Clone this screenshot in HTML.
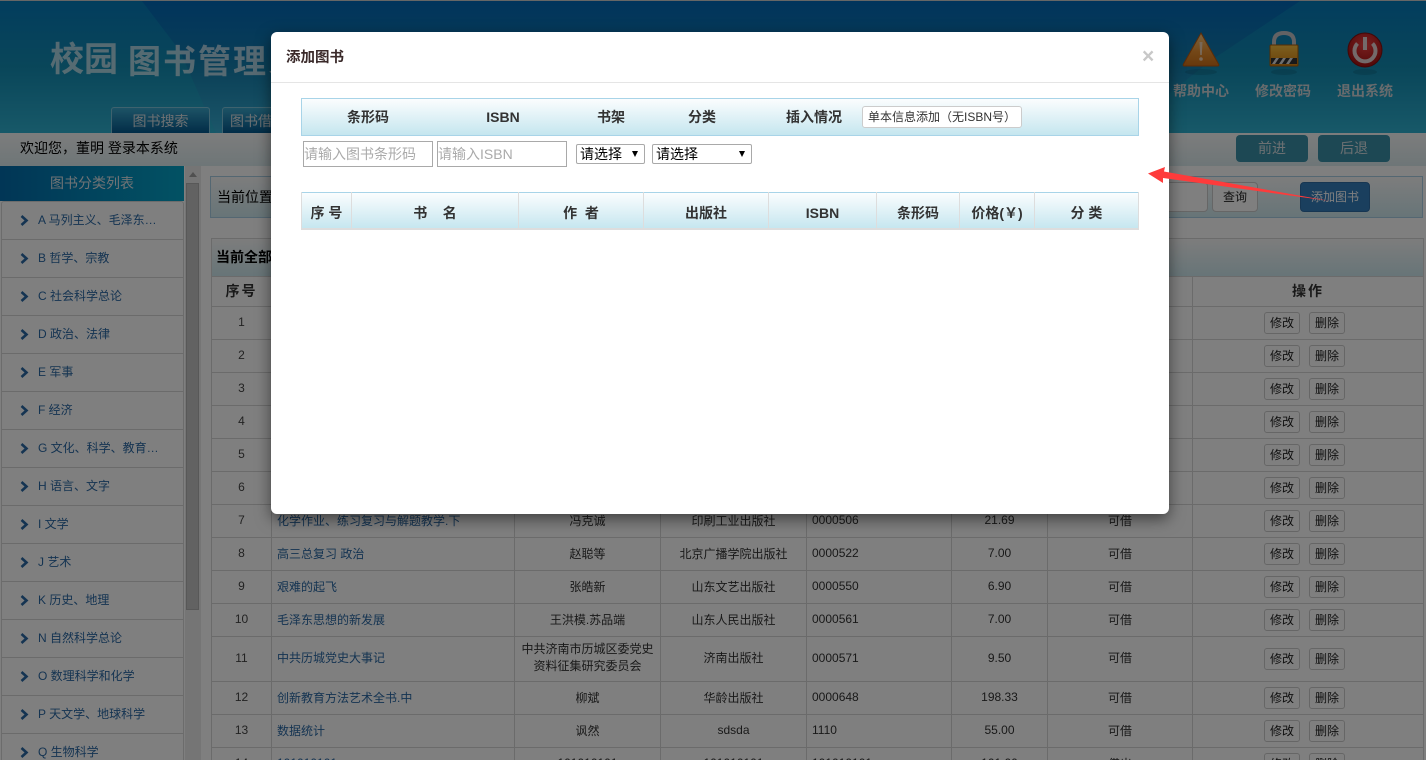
<!DOCTYPE html>
<html lang="zh-CN">
<head>
<meta charset="utf-8">
<title>校园图书管理系统</title>
<style>
*{box-sizing:border-box}
html,body{margin:0;padding:0;width:1426px;height:760px;overflow:hidden;background:#fff}
body{position:relative;font:12px "Liberation Sans","WenQuanYi Zen Hei","Noto Sans CJK SC",sans-serif;color:#333}
.abs{position:absolute}
#topline{left:0;top:0;width:1426px;height:1px;background:#ccc}
#header{left:0;top:1px;width:1426px;height:132px;background:linear-gradient(180deg,#0268b8 0,#147fae 50%,#38aed4 100%);overflow:hidden}
#header svg.bg{position:absolute;left:0;top:0}
.logo1{left:50px;top:38px;font-size:34px;font-weight:bold;color:rgba(255,255,255,.65);line-height:42px;letter-spacing:0}
.logo2{left:128px;top:41px;font-size:33px;font-weight:bold;color:rgba(255,255,255,.65);line-height:40px;letter-spacing:2px;white-space:nowrap}
.tab{top:106px;height:27px;border:1px solid #7dc5dc;border-bottom:0;border-radius:3px 3px 0 0;background:linear-gradient(180deg,#3aa6cc,#02568c);color:#d8e0e4;font-size:14px;line-height:26px;text-align:center;white-space:nowrap;overflow:hidden}
.toptext{top:81px;font-size:14px;color:#d0d6da;line-height:18px;width:70px;text-align:center;font-weight:bold;white-space:nowrap}
#welcome{left:0;top:133px;width:1426px;height:33px;background:linear-gradient(180deg,#fafafa,#dcecef);font-size:14px;line-height:31px;padding-left:20px;color:#000}
.navbtn{top:135px;width:72px;height:27px;background:#3a90a8;border-radius:4px;color:#d8e0e4;font-size:14px;text-align:center;line-height:27px}
#sidetitle{left:0;top:166px;width:184px;height:35px;background:linear-gradient(90deg,#026cac,#04a4c8);color:#e0e6ea;font-size:14px;line-height:35px;text-align:center}
#sidelist{left:1px;top:201px;width:183px;height:570px;background:#fff;border:1px solid #d8d8d8;border-radius:3px 3px 0 0;list-style:none;margin:0;padding:0}
#sidelist li{height:38px;border-bottom:1px solid #d6d6d6;line-height:36px;padding-left:36px;color:#2a68a4;position:relative;white-space:nowrap;font-size:12px}
#sidelist svg{position:absolute;left:18px;top:13px}
#scroll{left:185px;top:166px;width:16px;height:594px;background:#eaeaea}
#thumb{left:186px;top:183px;width:13px;height:427px;background:#c4c4c4;border:1px solid #b0b0b0}
#scrollup{left:189px;top:172px;width:0;height:0;border-left:4px solid transparent;border-right:4px solid transparent;border-bottom:5px solid #a0a0a0}
#content{left:201px;top:166px;width:1225px;height:594px;background:#fff}
#crumb{left:210px;top:176px;width:1213px;height:42px;border:1px solid #a8cfe4;background:linear-gradient(180deg,#fafafa,#cfeaf0);font-size:14px;line-height:40px;padding-left:6px;color:#000}
.cinput{top:182px;height:30px;border:1px solid #ccc;border-radius:4px;background:#fff}
.cbtn{top:182px;height:30px;border:1px solid #ccc;border-radius:4px;background:#fff;text-align:center;line-height:28px;color:#222}
#addbtn{left:1300px;top:182px;width:70px;height:30px;background:#357ebd;border:1px solid #2e6da4;border-radius:4px;color:#fff;line-height:28px;text-align:center;font-size:12px}
#main{left:211px;top:238px;width:1212px;border-collapse:collapse;table-layout:fixed;background:#fff}
#main caption{height:38px;line-height:36px;text-align:left;padding-left:4px;font-size:14px;font-weight:bold;color:#000;background:linear-gradient(180deg,#fafafa,#cfeaf0);border:1px solid #d6d6d6;border-bottom:0;caption-side:top}
#main th,#main td{border:1px solid #d6d6d6;text-align:center;padding:0 0 2px;font-weight:normal;height:33px}
#main th{font-size:14px;font-weight:bold;height:30px;letter-spacing:2px;color:#333}
#main td.t{text-align:left;padding-left:5px;color:#2a68a4}
#main td.i{text-align:left;padding-left:5px}
#main td.n{color:#444}
.b{display:inline-block;width:36px;height:22px;border:1px solid #ccc;border-radius:3px;background:#fff;line-height:20px;font-size:12px;text-align:center;margin:0 9px 0 0;vertical-align:middle;color:#222}
#main td.ops{font-size:0;text-align:left;padding:0 0 0 71px}
.tall td{height:45px!important;line-height:17px}
#overlay{left:0;top:0;width:1426px;height:760px;background:rgba(0,0,0,.5)}
#modal{left:271px;top:32px;width:898px;height:482px;background:#fff;border-radius:6px;box-shadow:0 5px 15px rgba(0,0,0,.5)}
#mhead{left:0;top:0;width:898px;height:51px;border-bottom:1px solid #e5e5e5}
#mtitle{left:15px;top:17px;font-size:14.5px;line-height:18px;font-weight:bold;color:#3a2a2a}
#mclose{left:871px;top:13px;font-size:21px;line-height:24px;font-weight:bold;color:#c8c8c8}
.hbar{left:30px;width:838px;height:38px;border:1px solid #a8d4e8;background:linear-gradient(180deg,#fbfdfe,#c5e6ef)}
.hl{position:absolute;top:0;line-height:36px;font-size:14px;font-weight:bold;color:#333;text-align:center;white-space:nowrap;transform:translateX(-50%)}
#addone{left:591px;top:74px;width:160px;height:22px;background:#fff;border:1px solid #ccc;border-radius:3px;font-size:12px;line-height:20px;text-align:center;color:#333;white-space:nowrap;padding:0}
.minput{top:109px;width:130px;height:26px;border:1px solid #a9a9a9;font:14px "Liberation Sans","WenQuanYi Zen Hei","Noto Sans CJK SC",sans-serif;padding:0;background:#fff;color:#333}
.minput::placeholder{color:#aaa;opacity:1}
.msel{top:112px;height:20px;border:1px solid #a9a9a9;border-radius:2px;background:#fff;font:14px "Liberation Sans","WenQuanYi Zen Hei","Noto Sans CJK SC",sans-serif;color:#000;appearance:none;-webkit-appearance:none;padding:0 3px;margin:0}
.sarrow{top:119px;width:0;height:0;border-left:3.5px solid transparent;border-right:3.5px solid transparent;border-top:6px solid #000}
#t2{left:30px;top:160px;width:837px;height:38px;border-collapse:collapse;table-layout:fixed;background:linear-gradient(180deg,#fbfdfe,#c5e6ef);border-top:1px solid #a8d4e8;border-bottom:2px solid #ddd}
#t2 th{font-size:14px;font-weight:bold;color:#333;border-left:1px solid #ddd;border-right:1px solid #ddd;padding:4px 0 0;height:35px;letter-spacing:0;white-space:nowrap;vertical-align:middle;line-height:16px}
#arrow{left:0;top:0;pointer-events:none}
</style>
</head>
<body>
<div class="abs" id="topline"></div>
<div class="abs" id="header">
  <svg class="bg" width="1426" height="132" viewBox="0 0 1426 132">
    <polygon points="0,0 142,0 180,50 216,132 0,132" fill="#10bec8" fill-opacity=".22"/>
    <polygon points="1300,0 1426,0 1426,132 1120,132 1210,60" fill="#10bec8" fill-opacity=".22"/>
  </svg>
  <div class="abs logo1">校园</div>
  <div class="abs logo2">图书管理系统</div>
  <div class="abs tab" style="left:111px;width:99px">图书搜索</div>
  <div class="abs tab" style="left:222px;width:99px;text-align:left;padding-left:7px">图书借阅</div>
  <svg class="abs" style="left:1176px;top:29px" width="52" height="50" viewBox="0 0 52 50">
    <defs>
      <linearGradient id="tri" x1="0" y1="0" x2="0" y2="1"><stop offset="0" stop-color="#f8c880"/><stop offset=".55" stop-color="#e89030"/><stop offset="1" stop-color="#d07018"/></linearGradient>
    </defs>
    <path d="M25 3 L42.500 34 Q43.500 36 41.500 36 L8.500 36 Q6.500 36 7.500 34 Z" fill="url(#tri)" stroke="#b85810" stroke-width="1"/>
    <path d="M23.500 12 L26.500 12 L25.800 25 L24.200 25 Z" fill="#f0d0b0"/>
    <circle cx="25" cy="29" r="1.800" fill="#f0d0b0"/>
    <ellipse cx="25" cy="42" rx="16" ry="3" fill="#0c3a50" fill-opacity=".2"/>
  </svg>
  <svg class="abs" style="left:1264px;top:29px" width="40" height="50" viewBox="0 0 40 50">
    <defs>
      <linearGradient id="lk" x1="0" y1="0" x2="0" y2="1"><stop offset="0" stop-color="#f8c040"/><stop offset="1" stop-color="#d88210"/></linearGradient>
    </defs>
    <path d="M10 17 V12 Q10 3 20 3 Q30 3 30 12 V17" fill="none" stroke="#c4c4c8" stroke-width="4"/>
    <rect x="6" y="15" width="28" height="21" rx="1" fill="url(#lk)" stroke="#a85c08"/>
    <rect x="7" y="28" width="26" height="6" fill="#333"/>
    <path d="M8 34 L12 28 H15 L11 34 Z M15 34 L19 28 H22 L18 34 Z M22 34 L26 28 H29 L25 34 Z" fill="#ddd"/>
    <ellipse cx="20" cy="42" rx="13" ry="3" fill="#0c3a50" fill-opacity=".2"/>
  </svg>
  <svg class="abs" style="left:1345px;top:29px" width="40" height="50" viewBox="0 0 40 50">
    <defs>
      <radialGradient id="pw" cx=".5" cy=".35" r=".7"><stop offset="0" stop-color="#f04040"/><stop offset="1" stop-color="#a00c0c"/></radialGradient>
    </defs>
    <circle cx="20" cy="20" r="17" fill="url(#pw)" stroke="#801010"/>
    <path d="M12.500 13.500 A10.500 10.500 0 1 0 27.500 13.500" fill="none" stroke="#e8d4d4" stroke-width="4"/>
    <rect x="18" y="7" width="4" height="13" fill="#e8d4d4"/>
    <ellipse cx="20" cy="42" rx="12" ry="3" fill="#0c3a50" fill-opacity=".2"/>
  </svg>
  <div class="abs toptext" style="left:1166px">帮助中心</div>
  <div class="abs toptext" style="left:1248px">修改密码</div>
  <div class="abs toptext" style="left:1330px">退出系统</div>
</div>
<div class="abs" id="welcome">欢迎您，董明 登录本系统</div>
<div class="abs navbtn" style="left:1236px">前进</div>
<div class="abs navbtn" style="left:1318px">后退</div>

<div class="abs" id="content"></div>
<div class="abs" id="sidetitle">图书分类列表</div>
<ul class="abs" id="sidelist">
<li><svg width="9" height="11" viewBox="0 0 9 11"><path d="M1.500 1 L6.500 5.500 L1.500 10" fill="none" stroke="#2a68a4" stroke-width="2.600"/></svg>A 马列主义、毛泽东…</li>
<li><svg width="9" height="11" viewBox="0 0 9 11"><path d="M1.500 1 L6.500 5.500 L1.500 10" fill="none" stroke="#2a68a4" stroke-width="2.600"/></svg>B 哲学、宗教</li>
<li><svg width="9" height="11" viewBox="0 0 9 11"><path d="M1.500 1 L6.500 5.500 L1.500 10" fill="none" stroke="#2a68a4" stroke-width="2.600"/></svg>C 社会科学总论</li>
<li><svg width="9" height="11" viewBox="0 0 9 11"><path d="M1.500 1 L6.500 5.500 L1.500 10" fill="none" stroke="#2a68a4" stroke-width="2.600"/></svg>D 政治、法律</li>
<li><svg width="9" height="11" viewBox="0 0 9 11"><path d="M1.500 1 L6.500 5.500 L1.500 10" fill="none" stroke="#2a68a4" stroke-width="2.600"/></svg>E 军事</li>
<li><svg width="9" height="11" viewBox="0 0 9 11"><path d="M1.500 1 L6.500 5.500 L1.500 10" fill="none" stroke="#2a68a4" stroke-width="2.600"/></svg>F 经济</li>
<li><svg width="9" height="11" viewBox="0 0 9 11"><path d="M1.500 1 L6.500 5.500 L1.500 10" fill="none" stroke="#2a68a4" stroke-width="2.600"/></svg>G 文化、科学、教育…</li>
<li><svg width="9" height="11" viewBox="0 0 9 11"><path d="M1.500 1 L6.500 5.500 L1.500 10" fill="none" stroke="#2a68a4" stroke-width="2.600"/></svg>H 语言、文字</li>
<li><svg width="9" height="11" viewBox="0 0 9 11"><path d="M1.500 1 L6.500 5.500 L1.500 10" fill="none" stroke="#2a68a4" stroke-width="2.600"/></svg>I 文学</li>
<li><svg width="9" height="11" viewBox="0 0 9 11"><path d="M1.500 1 L6.500 5.500 L1.500 10" fill="none" stroke="#2a68a4" stroke-width="2.600"/></svg>J 艺术</li>
<li><svg width="9" height="11" viewBox="0 0 9 11"><path d="M1.500 1 L6.500 5.500 L1.500 10" fill="none" stroke="#2a68a4" stroke-width="2.600"/></svg>K 历史、地理</li>
<li><svg width="9" height="11" viewBox="0 0 9 11"><path d="M1.500 1 L6.500 5.500 L1.500 10" fill="none" stroke="#2a68a4" stroke-width="2.600"/></svg>N 自然科学总论</li>
<li><svg width="9" height="11" viewBox="0 0 9 11"><path d="M1.500 1 L6.500 5.500 L1.500 10" fill="none" stroke="#2a68a4" stroke-width="2.600"/></svg>O 数理科学和化学</li>
<li><svg width="9" height="11" viewBox="0 0 9 11"><path d="M1.500 1 L6.500 5.500 L1.500 10" fill="none" stroke="#2a68a4" stroke-width="2.600"/></svg>P 天文学、地球科学</li>
<li><svg width="9" height="11" viewBox="0 0 9 11"><path d="M1.500 1 L6.500 5.500 L1.500 10" fill="none" stroke="#2a68a4" stroke-width="2.600"/></svg>Q 生物科学</li>
</ul>
<div class="abs" id="scroll"></div>
<div class="abs" id="scrollup"></div>
<div class="abs" id="thumb"></div>

<div class="abs" id="crumb">当前位置：图书管理</div>
<div class="abs cinput" style="left:1060px;width:148px"></div>
<div class="abs cbtn" style="left:1212px;width:46px">查询</div>
<div class="abs" id="addbtn">添加图书</div>

<table class="abs" id="main">
<caption>当前全部图书</caption>
<colgroup><col style="width:60px"><col style="width:243px"><col style="width:146px"><col style="width:146px"><col style="width:145px"><col style="width:96px"><col style="width:145px"><col style="width:231px"></colgroup>
<tr><th>序号</th><th>书名</th><th>作者</th><th>出版社</th><th>ISBN</th><th>价格</th><th>状态</th><th>操作</th></tr>
<tr><td class="n">1</td><td class="t"></td><td></td><td></td><td class="i"></td><td></td><td></td><td class="ops"><span class="b">修改</span><span class="b">删除</span></td></tr>
<tr><td class="n">2</td><td class="t"></td><td></td><td></td><td class="i"></td><td></td><td></td><td class="ops"><span class="b">修改</span><span class="b">删除</span></td></tr>
<tr><td class="n">3</td><td class="t"></td><td></td><td></td><td class="i"></td><td></td><td></td><td class="ops"><span class="b">修改</span><span class="b">删除</span></td></tr>
<tr><td class="n">4</td><td class="t"></td><td></td><td></td><td class="i"></td><td></td><td></td><td class="ops"><span class="b">修改</span><span class="b">删除</span></td></tr>
<tr><td class="n">5</td><td class="t"></td><td></td><td></td><td class="i"></td><td></td><td></td><td class="ops"><span class="b">修改</span><span class="b">删除</span></td></tr>
<tr><td class="n">6</td><td class="t"></td><td></td><td></td><td class="i"></td><td></td><td></td><td class="ops"><span class="b">修改</span><span class="b">删除</span></td></tr>
<tr><td class="n">7</td><td class="t">化学作业、练习复习与解题教学.下</td><td>冯克诚</td><td>印刷工业出版社</td><td class="i">0000506</td><td>21.69</td><td>可借</td><td class="ops"><span class="b">修改</span><span class="b">删除</span></td></tr>
<tr><td class="n">8</td><td class="t">高三总复习 政治</td><td>赵聪等</td><td>北京广播学院出版社</td><td class="i">0000522</td><td>7.00</td><td>可借</td><td class="ops"><span class="b">修改</span><span class="b">删除</span></td></tr>
<tr><td class="n">9</td><td class="t">艰难的起飞</td><td>张皓新</td><td>山东文艺出版社</td><td class="i">0000550</td><td>6.90</td><td>可借</td><td class="ops"><span class="b">修改</span><span class="b">删除</span></td></tr>
<tr><td class="n">10</td><td class="t">毛泽东思想的新发展</td><td>王洪模.苏品端</td><td>山东人民出版社</td><td class="i">0000561</td><td>7.00</td><td>可借</td><td class="ops"><span class="b">修改</span><span class="b">删除</span></td></tr>
<tr class="tall"><td class="n">11</td><td class="t">中共历城党史大事记</td><td>中共济南市历城区委党史<br>资料征集研究委员会</td><td>济南出版社</td><td class="i">0000571</td><td>9.50</td><td>可借</td><td class="ops"><span class="b">修改</span><span class="b">删除</span></td></tr>
<tr><td class="n">12</td><td class="t">创新教育方法艺术全书.中</td><td>柳斌</td><td>华龄出版社</td><td class="i">0000648</td><td>198.33</td><td>可借</td><td class="ops"><span class="b">修改</span><span class="b">删除</span></td></tr>
<tr><td class="n">13</td><td class="t">数据统计</td><td>讽然</td><td>sdsda</td><td class="i">1110</td><td>55.00</td><td>可借</td><td class="ops"><span class="b">修改</span><span class="b">删除</span></td></tr>
<tr><td class="n">14</td><td class="t">101010101</td><td>101010101</td><td>101010101</td><td class="i">101010101</td><td>101.00</td><td>借出</td><td class="ops"><span class="b">修改</span><span class="b">删除</span></td></tr>
</table>

<div class="abs" id="overlay"></div>

<div class="abs" id="modal">
  <div class="abs" id="mhead"></div>
  <div class="abs" id="mtitle">添加图书</div>
  <div class="abs" id="mclose">×</div>
  <div class="abs hbar" style="top:66px">
    <span class="hl" style="left:66px">条形码</span>
    <span class="hl" style="left:201px">ISBN</span>
    <span class="hl" style="left:309px">书架</span>
    <span class="hl" style="left:400px">分类</span>
    <span class="hl" style="left:512px">插入情况</span>
  </div>
  <button class="abs" id="addone">单本信息添加（无ISBN号）</button>
  <input class="abs minput" style="left:32px" placeholder="请输入图书条形码">
  <input class="abs minput" style="left:166px" placeholder="请输入ISBN">
  <select class="abs msel" style="left:305px;width:69px"><option>请选择</option></select>
  <div class="abs sarrow" style="left:361px"></div>
  <select class="abs msel" style="left:381px;width:100px"><option>请选择</option></select>
  <div class="abs sarrow" style="left:468px"></div>
  <table class="abs" id="t2">
    <colgroup><col style="width:50px"><col style="width:167px"><col style="width:125px"><col style="width:125px"><col style="width:108px"><col style="width:83px"><col style="width:75px"><col style="width:104px"></colgroup>
    <tr><th>序 号</th><th>书&nbsp;&nbsp;&nbsp;&nbsp;名</th><th>作&nbsp;&nbsp;者</th><th>出版社</th><th>ISBN</th><th>条形码</th><th>价格(￥)</th><th>分 类</th></tr>
  </table>
</div>

<svg class="abs" id="arrow" width="1426" height="760" viewBox="0 0 1426 760">
  <polygon points="1148,173.500 1165,167 1164,171.500 1330,201 1163,178 1163,183" fill="#fe3b3b"/>
</svg>
</body>
</html>
